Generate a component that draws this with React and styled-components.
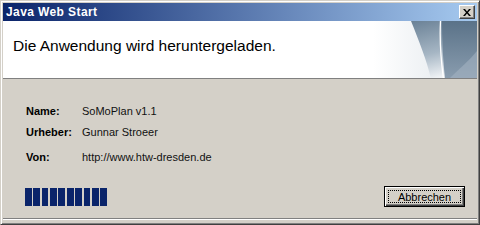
import React from "react";
import styled, { createGlobalStyle } from "styled-components";

const Global = createGlobalStyle`
  html, body { margin: 0; padding: 0; background: #d4d0c8; }
  body { font-family: "Liberation Sans", Arial, sans-serif; }
`;

const Window = styled.div`
  width: 480px;
  height: 225px;
  box-sizing: border-box;
  background: #d4d0c8;
  border-top: 1px solid #d4d0c8;
  border-left: 1px solid #d4d0c8;
  border-right: 1px solid #404040;
  border-bottom: 1px solid #404040;
  box-shadow: inset 1px 1px 0 #ffffff, inset -1px -1px 0 #808080;
  padding: 2px;
  display: flex;
  flex-direction: column;
`;

const TitleBar = styled.div`
  height: 18px;
  flex: none;
  display: flex;
  align-items: center;
  justify-content: space-between;
  padding: 0 2px 0 3px;
  background: linear-gradient(to right, #0a246a, #a6caf0);
`;

const Title = styled.span`
  color: #fff;
  font-weight: bold;
  font-size: 12px;
  letter-spacing: 0.4px;
`;

const CloseButton = styled.div`
  width: 16px;
  height: 14px;
  box-sizing: border-box;
  background: #d4d0c8;
  border-top: 1px solid #ffffff;
  border-left: 1px solid #ffffff;
  border-right: 1px solid #404040;
  border-bottom: 1px solid #404040;
  box-shadow: inset -1px -1px 0 #808080;
  display: flex;
  align-items: center;
  justify-content: center;
`;

const Header = styled.div`
  position: relative;
  height: 58px;
  flex: none;
  background: #ffffff;
  border-bottom: 1px solid #808080;
  display: flex;
  align-items: flex-start;
  padding: 16px 0 0 10px;
  box-sizing: border-box;
  overflow: hidden;
`;

const HeaderText = styled.h1`
  margin: 0;
  font-size: 15.5px;
  line-height: 18px;
  font-weight: normal;
  color: #000;
  position: relative;
  z-index: 1;
`;

const Decor = styled.svg`
  position: absolute;
  right: 0;
  top: 0;
`;

const Body = styled.div`
  flex: 1;
  display: flex;
  flex-direction: column;
  padding: 26px 10px 0 23px;
  border-bottom: 1px solid #808080;
  box-shadow: 0 1px 0 #ffffff;
  margin-bottom: 3px;
`;

const InfoGrid = styled.div`
  display: grid;
  grid-template-columns: 56px 1fr;
  font-size: 11px;
  color: #000;
`;

const Label = styled.div`
  font-weight: bold;
  height: ${(p) => p.$h}px;
`;

const Value = styled.div`
  height: ${(p) => p.$h}px;
  color: #111;
`;

const Footer = styled.div`
  display: flex;
  justify-content: space-between;
  align-items: center;
  margin-top: 21px;
`;

const Progress = styled.div`
  display: grid;
  grid-template-columns: repeat(10, 1fr);
  column-gap: 1.6px;
  width: 82px;
  height: 18px;
  margin-left: -1px;
`;

const Block = styled.div`
  background: #0a246a;
`;

const Button = styled.button`
  width: 81px;
  height: 21px;
  box-sizing: border-box;
  margin-right: 2px;
  padding: 0;
  background: #d4d0c8;
  border: 1px solid #000;
  box-shadow: inset 1px 1px 0 #ffffff, inset -1px -1px 0 #404040, inset -2px -2px 0 #808080;
  font-family: "Liberation Sans", Arial, sans-serif;
  font-size: 11px;
  color: #000;
  display: flex;
  align-items: center;
  justify-content: center;
  position: relative;
  &::after {
    content: "";
    position: absolute;
    left: 3px;
    top: 3px;
    right: 3px;
    bottom: 3px;
    border: 1px dotted #000;
  }
`;

const rows = [
  { label: "Name:", value: "SoMoPlan v1.1", h: 21 },
  { label: "Urheber:", value: "Gunnar Stroeer", h: 25 },
  { label: "Von:", value: "http://www.htw-dresden.de", h: 14 },
];

export default function App() {
  return (
    <>
      <Global />
      <Window>
        <TitleBar>
          <Title>Java Web Start</Title>
          <CloseButton>
            <svg width="8" height="7" viewBox="0 0 8 7">
              <path d="M0 0h2l2 2.5L6 0h2L5 3.5 8 7H6L4 4.5 2 7H0l3-3.5z" fill="#000" />
            </svg>
          </CloseButton>
        </TitleBar>
        <Header>
          <HeaderText>Die Anwendung wird heruntergeladen.</HeaderText>
          <Decor width="104" height="58" viewBox="0 0 104 58">
            <defs>
              <linearGradient id="fade" x1="0" y1="0" x2="1" y2="0">
                <stop offset="0" stopColor="#ffffff" />
                <stop offset="1" stopColor="#dfe5ea" />
              </linearGradient>
              <linearGradient id="mid" x1="0" y1="0" x2="0.3" y2="1">
                <stop offset="0" stopColor="#6a8196" />
                <stop offset="0.6" stopColor="#a6b6c4" />
                <stop offset="1" stopColor="#eef1f4" />
              </linearGradient>
              <linearGradient id="right" x1="0" y1="0" x2="0" y2="1">
                <stop offset="0" stopColor="#5a7288" />
                <stop offset="1" stopColor="#8a9daf" />
              </linearGradient>
            </defs>
            <rect x="0" y="0" width="104" height="58" fill="url(#fade)" />
            <path d="M38 0 C 46 20, 54 40, 58 58 L 104 58 L 104 0 Z" fill="url(#mid)" />
            <path d="M69 0 L 104 0 L 104 58 L 72 58 C 70 40, 69 20, 69 0 Z" fill="url(#right)" />
            <path d="M76 58 C 86 48, 96 40, 104 30 L104 58 Z" fill="#a3b3c1" opacity="0.6" />
            <path d="M67.5 0 C 66.5 20, 68 40, 70.5 58" stroke="#ffffff" strokeWidth="1.3" fill="none" />
          </Decor>
        </Header>
        <Body>
          <InfoGrid>
            {rows.map((r) => (
              <React.Fragment key={r.label}>
                <Label $h={r.h}>{r.label}</Label>
                <Value $h={r.h}>{r.value}</Value>
              </React.Fragment>
            ))}
          </InfoGrid>
          <Footer>
            <Progress>
              {Array.from({ length: 10 }).map((_, i) => (
                <Block key={i} />
              ))}
            </Progress>
            <Button>Abbrechen</Button>
          </Footer>
        </Body>
      </Window>
    </>
  );
}
